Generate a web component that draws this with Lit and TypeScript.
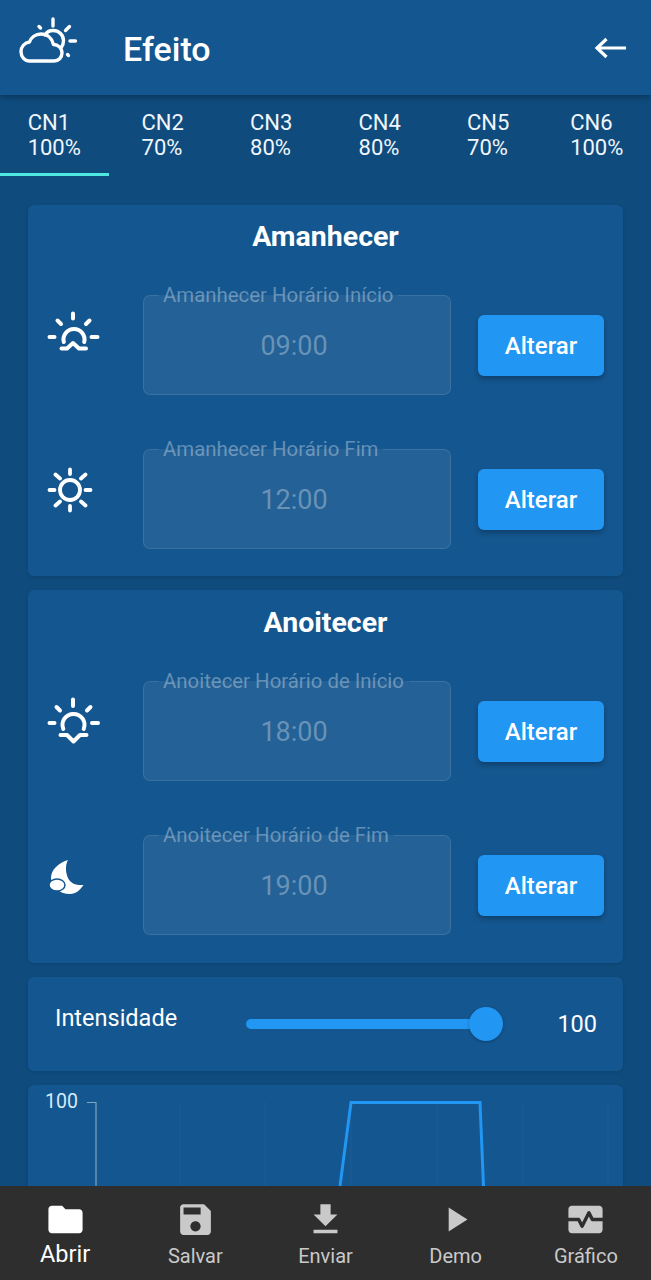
import { LitElement, html, css } from "lit";
import { customElement } from "lit/decorators.js";

const icons: Record<string, unknown> = {
  sunrise: html`<svg class="ico" viewBox="0 0 54 46" fill="none" stroke="#fff" stroke-width="4" stroke-linecap="round" stroke-linejoin="round">
    <path d="M27 3.500v5M3.500 27h5M45.500 27h6M11.500 10.500l3.500 3.500M43.500 10.500 40 14" />
    <path d="M17.800 32A10.500 10.500 0 1 1 38.200 32" />
    <path d="M15.500 38.500H21l6-5.500 6 5.500h7" />
  </svg>`,
  sun: html`<svg class="ico" viewBox="0 0 54 46" fill="none" stroke="#fff" stroke-width="3.800" stroke-linecap="round">
    <circle cx="24" cy="26" r="10" />
    <path d="M24 5.500V10M24 42v4.500M3.500 26h5M39.500 26h5M9.500 10.500l4.500 4M39.500 10.500l-4.500 4M9.500 41.500l4.500-4M39.500 41.500l-4.500-4" />
  </svg>`,
  sunset: html`<svg class="ico" viewBox="0 0 54 46" fill="none" stroke="#fff" stroke-width="4" stroke-linecap="round" stroke-linejoin="round">
    <path d="M27 3.500V10M3.500 27h5M46 27h6M10.500 11l3.500 3.500M44.500 11 41 14.500" />
    <path d="M17.300 33A11 11 0 1 1 37.700 33" />
    <path d="M14.500 39H21l6.500 6.500L34 39h6.500" />
  </svg>`,
  moon: html`<svg class="ico" viewBox="0 0 54 46" fill="#fff">
    <path d="M22 10C12 13 5 20 5 28c0 8 8 16 19 16 6 0 10-4 13.500-9-7 .5-12-1-15-6-3-6-3.500-14-.5-19z" />
    <ellipse cx="11" cy="35" rx="8" ry="6" stroke="#14568f" stroke-width="1.500" />
  </svg>`,
};

const nav: { label: string; path: string; active?: boolean }[] = [
  { label: "Abrir", active: true, path: "M10 4H4c-1.100 0-1.990.9-1.990 2L2 18c0 1.100.9 2 2 2h16c1.100 0 2-.9 2-2V8c0-1.100-.9-2-2-2h-8l-2-2z" },
  { label: "Salvar", path: "M17 3H5c-1.110 0-2 .9-2 2v14c0 1.100.89 2 2 2h14c1.100 0 2-.9 2-2V7l-4-4zm-5 16c-1.660 0-3-1.340-3-3s1.340-3 3-3 3 1.340 3 3-1.340 3-3 3zm3-10H5V5h10v4z" },
  { label: "Enviar", path: "M19 9h-4V3H9v6H5l7 7 7-7zM5 18v2h14v-2H5z" },
  { label: "Demo", path: "M8 5v14l11-7z" },
  { label: "Gráfico", path: "M15.110 12.450 14 10.240l-3.110 6.210c-.16.34-.51.55-.89.55s-.73-.21-.89-.55L7.380 13H2v5c0 1.100.9 2 2 2h16c1.100 0 2-.9 2-2v-5h-6c-.38 0-.73-.21-.89-.55zM20 4H4c-1.100 0-2 .9-2 2v5h6c.38 0 .73.21.89.55L10 13.760l3.110-6.210c.34-.68 1.450-.68 1.790 0L16.620 11H22V6c0-1.100-.9-2-2-2z" },
];

const tabs = [
  ["CN1", "100%"], ["CN2", "70%"], ["CN3", "80%"], ["CN4", "80%"], ["CN5", "70%"], ["CN6", "100%"],
];

const sections = [
  {
    title: "Amanhecer",
    cls: "dawn",
    rows: [
      { icon: "sunrise", label: "Amanhecer Horário Início", value: "09:00" },
      { icon: "sun", label: "Amanhecer Horário Fim", value: "12:00" },
    ],
  },
  {
    title: "Anoitecer",
    cls: "dusk",
    rows: [
      { icon: "sunset", label: "Anoitecer Horário de Início", value: "18:00" },
      { icon: "moon", label: "Anoitecer Horário de Fim", value: "19:00" },
    ],
  },
];

@customElement("app-root")
export class AppRoot extends LitElement {
  static styles = css`
    :host {
      display: flex;
      flex-direction: column;
      width: 651px;
      height: 1280px;
      overflow: hidden;
      background: #0f4b7d;
      font-family: Roboto, "Liberation Sans", sans-serif;
      color: #fff;
    }
    .bar {
      flex: none;
      height: 95px;
      display: flex;
      align-items: center;
      background: #14568f;
      box-shadow: 0 2px 6px rgba(0, 0, 0, 0.3);
      position: relative;
      z-index: 1;
    }
    .logo {
      width: 60px;
      height: 46px;
      margin: -17px 0 0 19px;
      flex: none;
      overflow: visible;
    }
    .title {
      margin-left: 44px;
      font-size: 34px;
      font-weight: 500;
      line-height: 40px;
      flex: 1;
      margin-top: 2px;
    }
    .back {
      width: 32px;
      height: 24px;
      margin-right: 25px;
      flex: none;
    }
    .tabs {
      flex: none;
      height: 82px;
      display: grid;
      grid-template-columns: repeat(6, 1fr);
    }
    .tab {
      display: flex;
      justify-content: center;
      padding-top: 15px;
      font-size: 22px;
      line-height: 25px;
      border-bottom: 3px solid transparent;
      box-sizing: border-box;
      height: 81px;
      color: #f0f6fb;
    }
    .tab-text {
      display: flex;
      flex-direction: column;
      align-items: flex-start;
    }
    .tab.on {
      border-bottom-color: #4fe8e0;
    }
    main {
      flex: 1;
      min-height: 0;
      overflow: hidden;
      display: flex;
      flex-direction: column;
      gap: 14px;
      padding: 28px 28px 0;
    }
    .card {
      flex: none;
      background: #14568f;
      border-radius: 6px;
      box-shadow: 0 1px 3px rgba(0, 0, 0, 0.12);
    }
    .group {
      padding: 15px 20px 27px;
    }
    .group.dusk {
      padding: 16px 20px 28px;
    }
    h2 {
      margin: 0 0 43px;
      text-align: center;
      font-size: 28.500px;
      font-weight: 700;
      line-height: 32px;
      transform: translateY(1px);
    }
    .rows {
      display: flex;
      flex-direction: column;
      gap: 54px;
    }
    .row {
      height: 100px;
      display: grid;
      grid-template-columns: 95px 308px 153px;
      align-items: center;
    }
    .icon-cell {
      transform: translate(-2px, -12px);
    }
    .ico {
      display: block;
      width: 54px;
      height: 46px;
      overflow: visible;
    }
    fieldset {
      box-sizing: border-box;
      height: 111px;
      margin: -11px 0 0;
      padding: 0 16px;
      min-width: 0;
      border: 1px solid rgba(255, 255, 255, 0.1);
      border-radius: 7px;
      background: rgba(255, 255, 255, 0.07);
      display: block;
    }
    legend {
      margin-left: -1px;
      padding: 0 5px 0 4px;
      font-size: 20.400px;
      line-height: 23px;
      color: rgba(255, 255, 255, 0.34);
      white-space: nowrap;
    }
    .value {
      height: 100px;
      margin-top: -11px;
      display: flex;
      align-items: center;
      justify-content: center;
      font-size: 27px;
      color: rgba(255, 255, 255, 0.32);
      transform: translateX(-3px);
    }
    .alter {
      height: 61px;
      border: 0;
      border-radius: 6px;
      background: #2196f3;
      color: #fff;
      font: 500 24px Roboto, sans-serif;
      margin-left: 27px;
      width: 126px;
      box-shadow: 0 3px 5px rgba(0, 0, 0, 0.25);
      padding: 1px 0 0;
    }
    .intensity {
      height: 94px;
      display: flex;
      align-items: center;
      padding: 0 26px 0 27px;
    }
    .intensity .name {
      width: 191px;
      font-size: 23.500px;
      line-height: 28px;
      margin-top: -12px;
      flex: none;
    }
    .slider {
      position: relative;
      width: 257px;
      height: 34px;
      flex: none;
    }
    .track {
      margin-top: 12px;
      width: 240px;
      height: 10px;
      background: #2196f3;
      border-radius: 5px 0 0 5px;
    }
    .thumb {
      position: absolute;
      right: 0;
      top: 0;
      width: 34px;
      height: 34px;
      border-radius: 50%;
      background: #2196f3;
      box-shadow: 0 1px 3px rgba(0, 0, 0, 0.25);
    }
    .num {
      flex: 1;
      text-align: right;
      font-size: 23.500px;
    }
    .chart {
      height: 300px;
    }
    .chart svg {
      display: block;
      width: 595px;
      height: 300px;
    }
    .chart text {
      font: 19.500px Roboto, sans-serif;
      fill: #d6ebf8;
    }
    nav {
      flex: none;
      height: 94px;
      display: grid;
      grid-template-columns: repeat(5, 1fr);
      background: #2e2e2e;
      position: relative;
    }
    .item {
      display: flex;
      flex-direction: column;
      align-items: center;
      color: #c9c9c9;
      padding-top: 13px;
      font-size: 20px;
      line-height: 26px;
    }
    .item svg {
      width: 41px;
      height: 41px;
      fill: currentColor;
      display: block;
      margin-bottom: 3px;
    }
    .item.on {
      color: #fff;
      font-size: 23.500px;
    }
    .item.on svg {
      margin-bottom: 1px;
    }
  `;

  render() {
    return html`
      <header class="bar">
        <svg class="logo" viewBox="0 0 60 46" fill="none" stroke="#fff" stroke-width="3.400" stroke-linecap="round" stroke-linejoin="round">
          <path d="M10 45H35c4.500 0 8-3.500 8-8 0-5-4-8.500-8.500-8.500C33 22 28 18 22 18c-5.500 0-10 3.500-11.500 8C5.500 26.500 2 31 2 35.500 2 41 6 45 10 45z" />
          <path d="M26 19c2-3.500 5-4.500 8-4.500 6 0 10.500 4.500 10.500 10 0 2.500-.5 4.500-2 6.500" />
          <path d="M34 3v7M50.500 10.500l-4 4M20 10.500l1.500 1.500M51 25h5.500M48.500 38.500l1 1" />
        </svg>
        <div class="title">Efeito</div>
        <svg class="back" viewBox="0 0 32 24" fill="none" stroke="#fff" stroke-width="3.200">
          <path d="M32 12H3M12.500 3 3 12l9.500 9" />
        </svg>
      </header>
      <div class="tabs">
        ${tabs.map(
          ([a, b], i) => html`<div class="tab ${i === 0 ? "on" : ""}"><div class="tab-text"><span>${a}</span><span>${b}</span></div></div>`
        )}
      </div>
      <main>
        ${sections.map(
          (s) => html`
            <section class="card group ${s.cls}">
              <h2>${s.title}</h2>
              <div class="rows">
                ${s.rows.map(
                  (r) => html`
                    <div class="row">
                      <div class="icon-cell">${icons[r.icon]}</div>
                      <fieldset>
                        <legend>${r.label}</legend>
                        <div class="value">${r.value}</div>
                      </fieldset>
                      <button class="alter">Alterar</button>
                    </div>
                  `
                )}
              </div>
            </section>
          `
        )}
        <section class="card intensity">
          <div class="name">Intensidade</div>
          <div class="slider"><div class="track"></div><div class="thumb"></div></div>
          <div class="num">100</div>
        </section>
        <section class="card chart">
          <svg viewBox="0 0 595 300" fill="none">
            <g stroke="rgba(255,255,255,0.02)" stroke-width="2">
              <path d="M152 17v283M237 17v283M323 17v283M409 17v283M495 17v283M580 17v283" />
            </g>
            <path d="M59 17.500h9M68 17v283" stroke="#83a5bf" stroke-width="1.200" />
            <text x="17" y="23">100</text>
            <path d="M312 101 323 17.500H452L455.500 101" stroke="#2196f3" stroke-width="3" />
          </svg>
        </section>
      </main>
      <nav>
        ${nav.map(
          (n) => html`
            <div class="item ${n.active ? "on" : ""}">
              <svg viewBox="0 0 24 24"><path d="${n.path}" /></svg>
              <span>${n.label}</span>
            </div>
          `
        )}
      </nav>
    `;
  }
}
